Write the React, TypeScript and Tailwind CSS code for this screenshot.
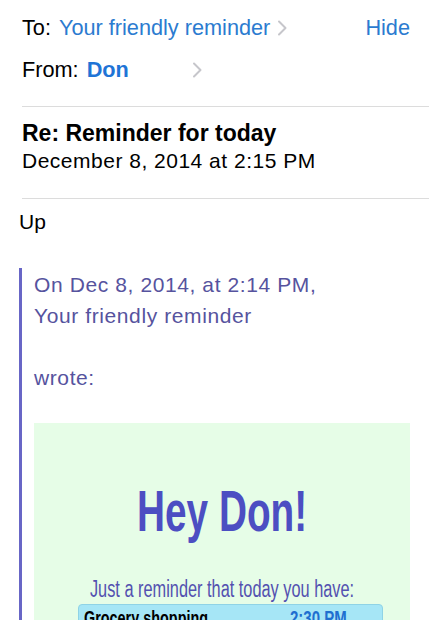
import React from 'react';

function Chevron({ className }: { className?: string }) {
  return (
    <svg className={className} width="10" height="16" viewBox="0 0 10 16" fill="none">
      <path d="M2 1.5 L8.5 8 L2 14.5" stroke="#c6c6cb" strokeWidth="2" strokeLinecap="round" strokeLinejoin="round" />
    </svg>
  );
}

export default function App() {
  return (
    <div className="w-[429px] h-[620px] overflow-hidden bg-white text-black font-['Liberation_Sans',Arial,sans-serif]">
      {/* header */}
      <div className="pl-[22px]">
        <div className="border-b border-[#dcdcdc] pb-[21px] pt-[13px] pr-[19px]">
          <div className="flex items-center text-[21.7px] leading-[30px]">
            <span>To:</span>
            <span className="ml-[8px] text-[#2b7bd0]">Your friendly reminder</span>
            <Chevron className="ml-[7px]" />
            <span className="ml-auto text-[#2b7bd0]">Hide</span>
          </div>
          <div className="mt-[12px] flex items-center text-[21.7px] leading-[30px]">
            <span>From:</span>
            <span className="ml-[8px] font-bold text-[#1f74d6]">Don</span>
            <Chevron className="ml-[63px]" />
          </div>
        </div>
        <div className="border-b border-[#dcdcdc] pt-[12px] pb-[23px]">
          <div className="text-[23px] leading-[28px] font-bold">Re: Reminder for today</div>
          <div className="text-[21px] leading-[28px] tracking-[0.5px]">December 8, 2014 at 2:15 PM</div>
        </div>
      </div>

      {/* body */}
      <div className="pl-[19px] pr-[19px]">
        <div className="pt-[9px] text-[21px] leading-[28px]">Up</div>
        <div className="mt-[32px] border-l-[3px] border-[#6866c6] pl-[12px] pt-[1px]">
          <div className="text-[21px] leading-[31px] text-[#56539e] tracking-[0.6px]">
            <div>On Dec 8, 2014, at 2:14 PM,</div>
            <div>Your friendly reminder</div>
            <div>&nbsp;</div>
            <div>wrote:</div>
          </div>
          <div className="mt-[30px] w-[376px] bg-[#e6fde7] pt-[58px] pb-[40px]">
            <div className="text-center text-[57px] leading-[60px] font-bold text-[#4c4ec2]">
              <span className="inline-block scale-x-[0.68]">Hey Don!</span>
            </div>
            <div className="mt-[36px] text-center text-[23px] leading-[24px] text-[#5351b0]">
              <span className="inline-block scale-x-[0.71] whitespace-nowrap">Just a reminder that today you have:</span>
            </div>
            <div className="ml-[44px] mt-[3px] w-[305px] rounded-[4px] border border-[#8fd3e6] bg-[#a6e6f6] px-[5px] pt-[2px] pb-[10px]">
              <div className="flex items-center text-[20px] leading-[22px] font-bold">
                <span className="inline-block origin-left scale-x-[0.72] text-black whitespace-nowrap">Grocery shopping</span>
                <span className="ml-auto mr-[11px] inline-block origin-left scale-x-[0.75] text-[#1f6fd0] whitespace-nowrap">2:30 PM</span>
              </div>
            </div>
          </div>
        </div>
      </div>
    </div>
  );
}
